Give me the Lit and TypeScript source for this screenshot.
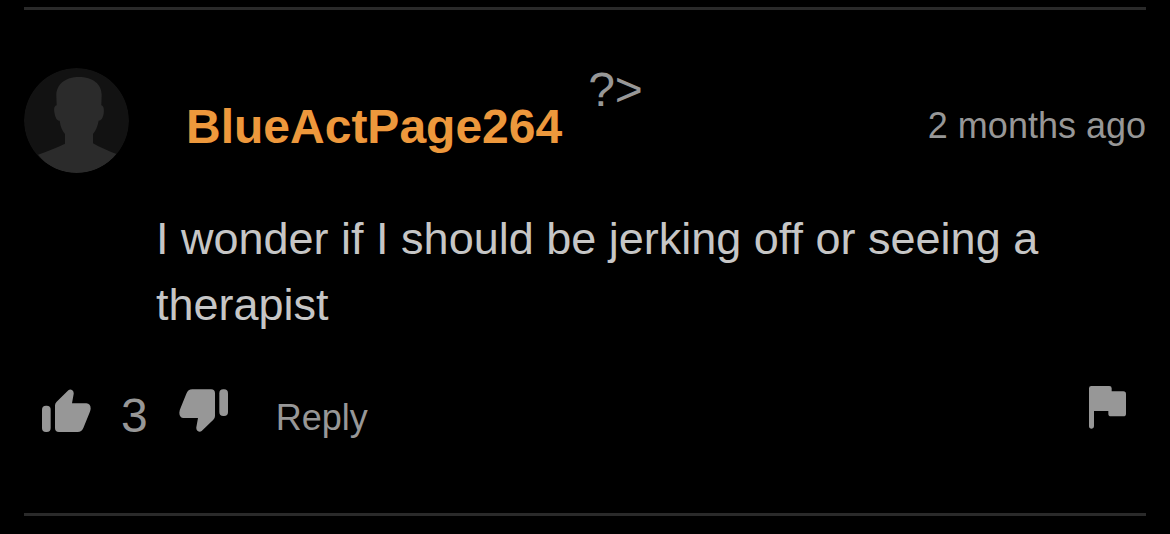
import { LitElement, html, css } from "lit";
import { customElement, property } from "lit/decorators.js";

@customElement("user-avatar")
class UserAvatar extends LitElement {
  static styles = css`
    :host {
      display: block;
      flex: none;
      width: 105px;
      height: 105px;
      border-radius: 50%;
      overflow: hidden;
    }
    .picture {
      display: block;
      width: 100%;
      height: 100%;
    }
  `;

  render() {
    return html`
      <svg class="picture" viewBox="42 39 315 315" aria-hidden="true">
        <circle cx="199.5" cy="196.5" r="157.5" fill="#121212" />
        <path
          fill="#2b2b2b"
          d="M207 66C166 66 139 88 139 122L140 151C132 153 131 163 134 176C137 190 141 197 149 197C151 215 157 228 165 237L165 266C140 278 112 289 84 299C110 333 153 354 200 354C248 354 291 333 319 297C293 287 270 277 249 265L249 237C258 226 263 213 266 197C274 196 278 190 281 176C283 163 281 153 274 151L275 120C275 87 248 66 207 66Z"
        />
      </svg>
    `;
  }
}

@customElement("comment-card")
class CommentCard extends LitElement {
  @property() author = "";
  @property() time = "";
  @property() text = "";
  @property({ type: Number }) votes = 0;

  static styles = css`
    :host {
      display: block;
    }
    .comment {
      border: solid #2a2a2a;
      border-width: 3px 0;
      padding: 58px 0 65px;
    }
    .header {
      display: flex;
      align-items: flex-start;
      line-height: 44px;
    }
    .author {
      margin-left: 57px;
      padding-top: 37px;
      font-size: 48px;
      font-weight: 700;
      color: #ed983c;
      text-decoration: none;
    }
    .stray {
      margin-left: 26px;
      font-size: 48px;
    }
    .time {
      margin-left: auto;
      padding-top: 36px;
      font-size: 36px;
    }
    .text {
      margin: 33px 80px 48px 132px;
      font-size: 45px;
      line-height: 66px;
      color: #c6c6c6;
    }
    .actions {
      display: flex;
      align-items: flex-start;
      padding: 0 20px 0 18px;
      line-height: 60px;
    }
    .action {
      margin: 0;
      padding: 0;
      border: 0;
      background: none;
      color: inherit;
      font: inherit;
      cursor: pointer;
    }
    .vote {
      padding-top: 3px;
    }
    .icon {
      display: block;
      height: 43px;
      fill: currentColor;
    }
    .thumb {
      width: 49px;
    }
    .flag {
      width: 37px;
    }
    .votes {
      margin: 0 31px 0 30px;
      font-size: 48px;
    }
    .reply {
      margin-left: 48px;
      padding-top: 2px;
      font-size: 36px;
    }
    .report {
      margin-left: auto;
    }
  `;

  render() {
    return html`
      <article class="comment">
        <header class="header">
          <user-avatar></user-avatar>
          <a class="author" href="#">${this.author}</a>
          <span class="stray">?&gt;</span>
          <time class="time">${this.time}</time>
        </header>
        <p class="text">${this.text}</p>
        <div class="actions">
          <button class="action vote" aria-label="Like">
            <svg class="icon thumb" viewBox="36 42 147 129">
              <rect x="36" y="92" width="26" height="79" rx="12" />
              <path
                d="M75 91Q75 85 80 80L115 46Q121 41 127 46Q132 50 131 57L126 85H169Q182 86 182 101Q181 108 178 115L160 159Q155 171 143 171H87Q75 171 75 159Z"
              />
            </svg>
          </button>
          <span class="votes">${this.votes}</span>
          <button class="action vote" aria-label="Dislike">
            <svg class="icon thumb" viewBox="446 42 147 129">
              <rect x="567" y="43" width="26" height="80" rx="12" />
              <path
                d="M554 123Q554 129 549 134L514 168Q508 173 502 168Q497 164 498 157L503 129H460Q447 128 447 113Q447 106 451 98L468 56Q473 43 486 43H542Q554 43 554 55Z"
              />
            </svg>
          </button>
          <button class="action reply">Reply</button>
          <button class="action report" aria-label="Report">
            <svg class="icon flag" viewBox="57 48 111 129">
              <path
                d="M64 48H118Q125 48 125 55V64H160Q168 64 168 72V131Q168 139 160 139H123Q115 139 115 131V123H72V169Q72 176 65 176Q57 176 57 169V55Q57 48 64 48Z"
              />
            </svg>
          </button>
        </div>
      </article>
    `;
  }
}

@customElement("app-root")
class AppRoot extends LitElement {
  static styles = css`
    :host {
      display: block;
      box-sizing: border-box;
      min-height: 100vh;
      padding: 7px 24px 0;
      background: #000;
      color: #979797;
      font-family: "Liberation Sans", Arial, sans-serif;
    }
  `;

  render() {
    return html`
      <comment-card
        author="BlueActPage264"
        time="2 months ago"
        text="I wonder if I should be jerking off or seeing a therapist"
        votes="3"
      ></comment-card>
    `;
  }
}
